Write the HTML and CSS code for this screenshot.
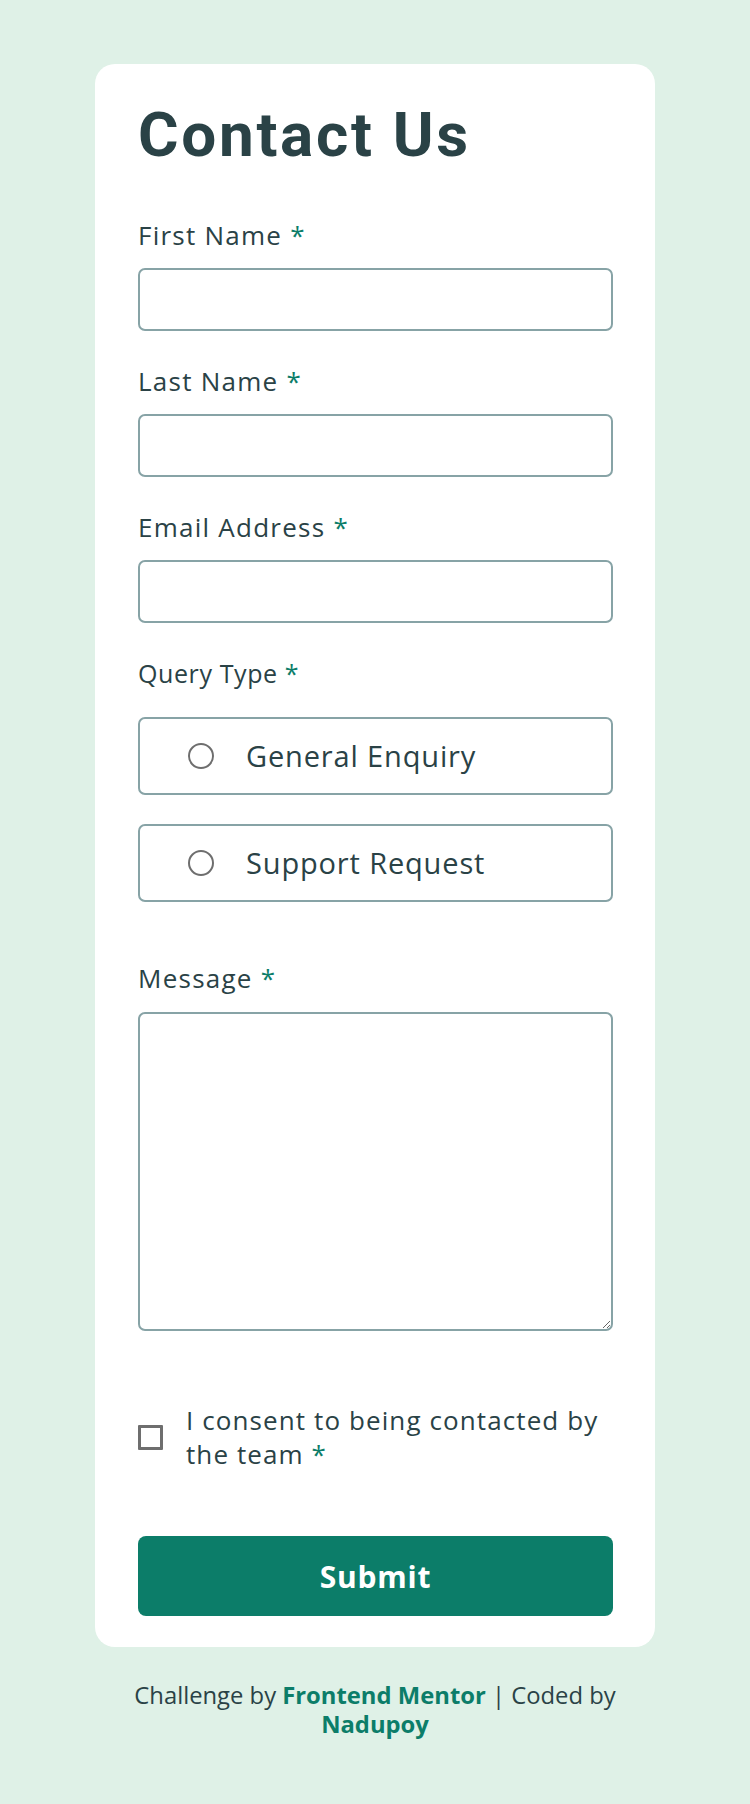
FILE: index.html
```html
<!DOCTYPE html>
<html lang="en">
<head>
<meta charset="utf-8">
<title>Contact Us</title>
<link rel="stylesheet" href="styles.css">
</head>
<body>
<main class="page">
  <form class="card">
    <h1 class="title">Contact Us</h1>

    <div class="field">
      <label class="label" for="first">First Name <span class="req">*</span></label>
      <input class="input" id="first" type="text">
    </div>

    <div class="field">
      <label class="label" for="last">Last Name <span class="req">*</span></label>
      <input class="input" id="last" type="text">
    </div>

    <div class="field">
      <label class="label" for="email">Email Address <span class="req">*</span></label>
      <input class="input" id="email" type="email">
    </div>

    <div class="query" role="radiogroup" aria-labelledby="qlabel">
      <div class="label label--query" id="qlabel">Query Type <span class="req">*</span></div>
      <div class="options">
        <label class="option">
          <input class="radio" type="radio" name="query">
          <span class="option-text">General Enquiry</span>
        </label>
        <label class="option">
          <input class="radio" type="radio" name="query">
          <span class="option-text">Support Request</span>
        </label>
      </div>
    </div>

    <div class="field field--message">
      <label class="label" for="message">Message <span class="req">*</span></label>
      <textarea class="textarea" id="message"></textarea>
    </div>

    <label class="consent">
      <input class="checkbox" type="checkbox">
      <span class="consent-text"><span>I consent to being contacted by</span> <span class="nowrap">the team <span class="req">*</span></span></span>
    </label>

    <button class="submit" type="button">Submit</button>
  </form>

  <footer class="attribution">
    Challenge by <a class="link" href="#">Frontend Mentor</a> | Coded by <a class="link" href="#">Nadupoy</a>
  </footer>
</main>
</body>
</html>
```

FILE: styles.css
```css
* {
  box-sizing: border-box;
}

body {
  margin: 0;
  background: #dff1e7;
  font-family: "Open Sans", "Noto Sans", sans-serif;
  color: #2a4246;
}

.page {
  padding: 64px 0 40px;
}

.card {
  width: 560px;
  margin: 0 auto;
  background: #ffffff;
  border-radius: 20px;
  padding: 40px 42px 31px 43px;
  display: flex;
  flex-direction: column;
}

.title {
  margin: 0 0 52px;
  font-family: Roboto, "Open Sans", sans-serif;
  font-weight: 700;
  font-size: 62px;
  line-height: 62px;
  letter-spacing: 2.7px;
  color: #2a4246;
}

.field {
  display: flex;
  flex-direction: column;
  margin-bottom: 33px;
}

.label {
  display: block;
  font-size: 26px;
  line-height: 34px;
  letter-spacing: 1.25px;
  margin-bottom: 16px;
  color: #2a4246;
}

.req {
  color: #0c7d69;
}

.nowrap {
  white-space: nowrap;
}

.input {
  display: block;
  width: 100%;
  height: 63px;
  border: 2px solid #87a3a6;
  border-radius: 7px;
  background: #fff;
  font: inherit;
  font-size: 25px;
  padding: 0 20px;
  color: #2a4246;
  outline: none;
}

.query {
  display: flex;
  flex-direction: column;
}

.label--query {
  font-size: 25px;
  letter-spacing: 0.6px;
  margin-bottom: 27px;
}

.options {
  display: flex;
  flex-direction: column;
  gap: 29px;
}

.option {
  display: flex;
  align-items: center;
  height: 78px;
  border: 2px solid #87a3a6;
  border-radius: 7px;
  padding-left: 48px;
  cursor: pointer;
}

.radio {
  appearance: none;
  -webkit-appearance: none;
  margin: 0 32px 0 0;
  width: 26px;
  height: 26px;
  border: 2.5px solid #6e6e6e;
  border-radius: 50%;
  background: #fff;
  flex: none;
}

.option-text {
  font-size: 29px;
  line-height: 36px;
  letter-spacing: 0.85px;
  color: #2a4246;
}

.field--message {
  margin-top: 59px;
  margin-bottom: 0;
}

.field--message .label {
  margin-bottom: 17px;
}

.textarea {
  display: block;
  width: 100%;
  height: 319px;
  border: 2px solid #87a3a6;
  border-radius: 7px;
  font: inherit;
  font-size: 25px;
  padding: 12px 20px;
  color: #2a4246;
  outline: none;
  resize: vertical;
}

.consent {
  display: flex;
  align-items: center;
  gap: 23px;
  margin-top: 72px;
  cursor: pointer;
}

.checkbox {
  appearance: none;
  -webkit-appearance: none;
  margin: 0;
  width: 25px;
  height: 25px;
  border: 3px solid #6e6e6e;
  border-radius: 1px;
  background: #fff;
  flex: none;
}

.consent-text {
  font-size: 26px;
  line-height: 34px;
  letter-spacing: 1.1px;
  color: #2a4246;
}

.submit {
  margin-top: 65px;
  height: 80px;
  width: 100%;
  border: none;
  border-radius: 8px;
  background: #0c7d69;
  color: #ffffff;
  font-family: "Open Sans", sans-serif;
  font-weight: 700;
  font-size: 30px;
  letter-spacing: 0.8px;
  cursor: pointer;
}

.attribution {
  width: 560px;
  margin: 0 auto;
  padding-top: 34px;
  text-align: center;
  font-size: 23.8px;
  line-height: 29px;
  color: #2a4246;
}

.link {
  color: #0c7d69;
  font-weight: 700;
  text-decoration: none;
}
```
